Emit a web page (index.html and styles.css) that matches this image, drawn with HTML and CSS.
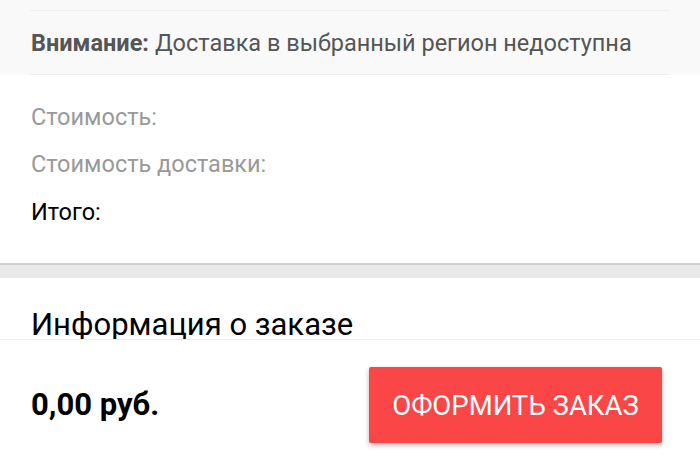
FILE: index.html
```html
<!DOCTYPE html>
<html lang="ru">
<head>
<meta charset="utf-8">
<link rel="stylesheet" href="styles.css">
</head>
<body>
<div class="page">
  <div class="content">
    <div class="notice">
      <div class="notice-inner"><b>Внимание:</b> Доставка в выбранный регион недоступна</div>
    </div>
    <div class="summary">
      <div class="row muted">Стоимость:</div>
      <div class="row muted">Стоимость доставки:</div>
      <div class="row">Итого:</div>
    </div>
    <div class="divider"></div>
    <div class="info">
      <h2 class="info-title">Информация о заказе</h2>
    </div>
  </div>
  <div class="footer">
    <div class="price">0,00 руб.</div>
    <button class="order-btn">ОФОРМИТЬ ЗАКАЗ</button>
  </div>
</div>
</body>
</html>
```
FILE: styles.css
```css
html, body {
  margin: 0;
  padding: 0;
}
body {
  font-family: Roboto, "Liberation Sans", sans-serif;
  background: #fff;
  color: #000;
}
.page {
  width: 700px;
  height: 460px;
  display: flex;
  flex-direction: column;
  overflow: hidden;
}
.content {
  flex: 1;
  overflow: hidden;
}
.notice {
  background: #f9f9f9;
  padding: 10px 30px 0;
}
.notice-inner {
  border-top: 1px solid #efefef;
  border-bottom: 1px solid #efefef;
  height: 63px;
  display: flex;
  align-items: center;
  padding-left: 1px;
  font-size: 23.5px;
  color: #555;
  white-space: nowrap;
}
.notice-inner b {
  font-weight: 700;
  margin-right: 6px;
}
.summary {
  padding: 18px 31px 8px;
  height: 162px;
  box-sizing: content-box;
}
.row {
  height: 47.5px;
  display: flex;
  align-items: center;
  font-size: 23.5px;
}
.muted {
  color: #999;
}
.divider {
  border-top: 2px solid #cfcfcf;
  background: #e8e9e8;
  height: 13px;
}
.info {
  padding: 29px 31px 0;
}
.info-title {
  margin: 0;
  font-weight: 400;
  font-size: 31px;
  line-height: 36px;
  white-space: nowrap;
}
.footer {
  height: 120px;
  border-top: 1px solid #ececec;
  display: flex;
  align-items: center;
  justify-content: space-between;
  padding: 0 38px 0 31px;
  flex-shrink: 0;
}
.price {
  font-size: 31px;
  font-weight: 700;
  margin-top: 8px;
}
.order-btn {
  width: 293px;
  height: 76px;
  border: none;
  border-radius: 2px;
  background: #fa4646;
  color: #fff;
  font-family: Roboto, "Liberation Sans", sans-serif;
  font-size: 27.5px;
  font-weight: 400;
  box-shadow: 0 2px 5px rgba(0,0,0,0.3);
  margin-top: 10px;
}
```
